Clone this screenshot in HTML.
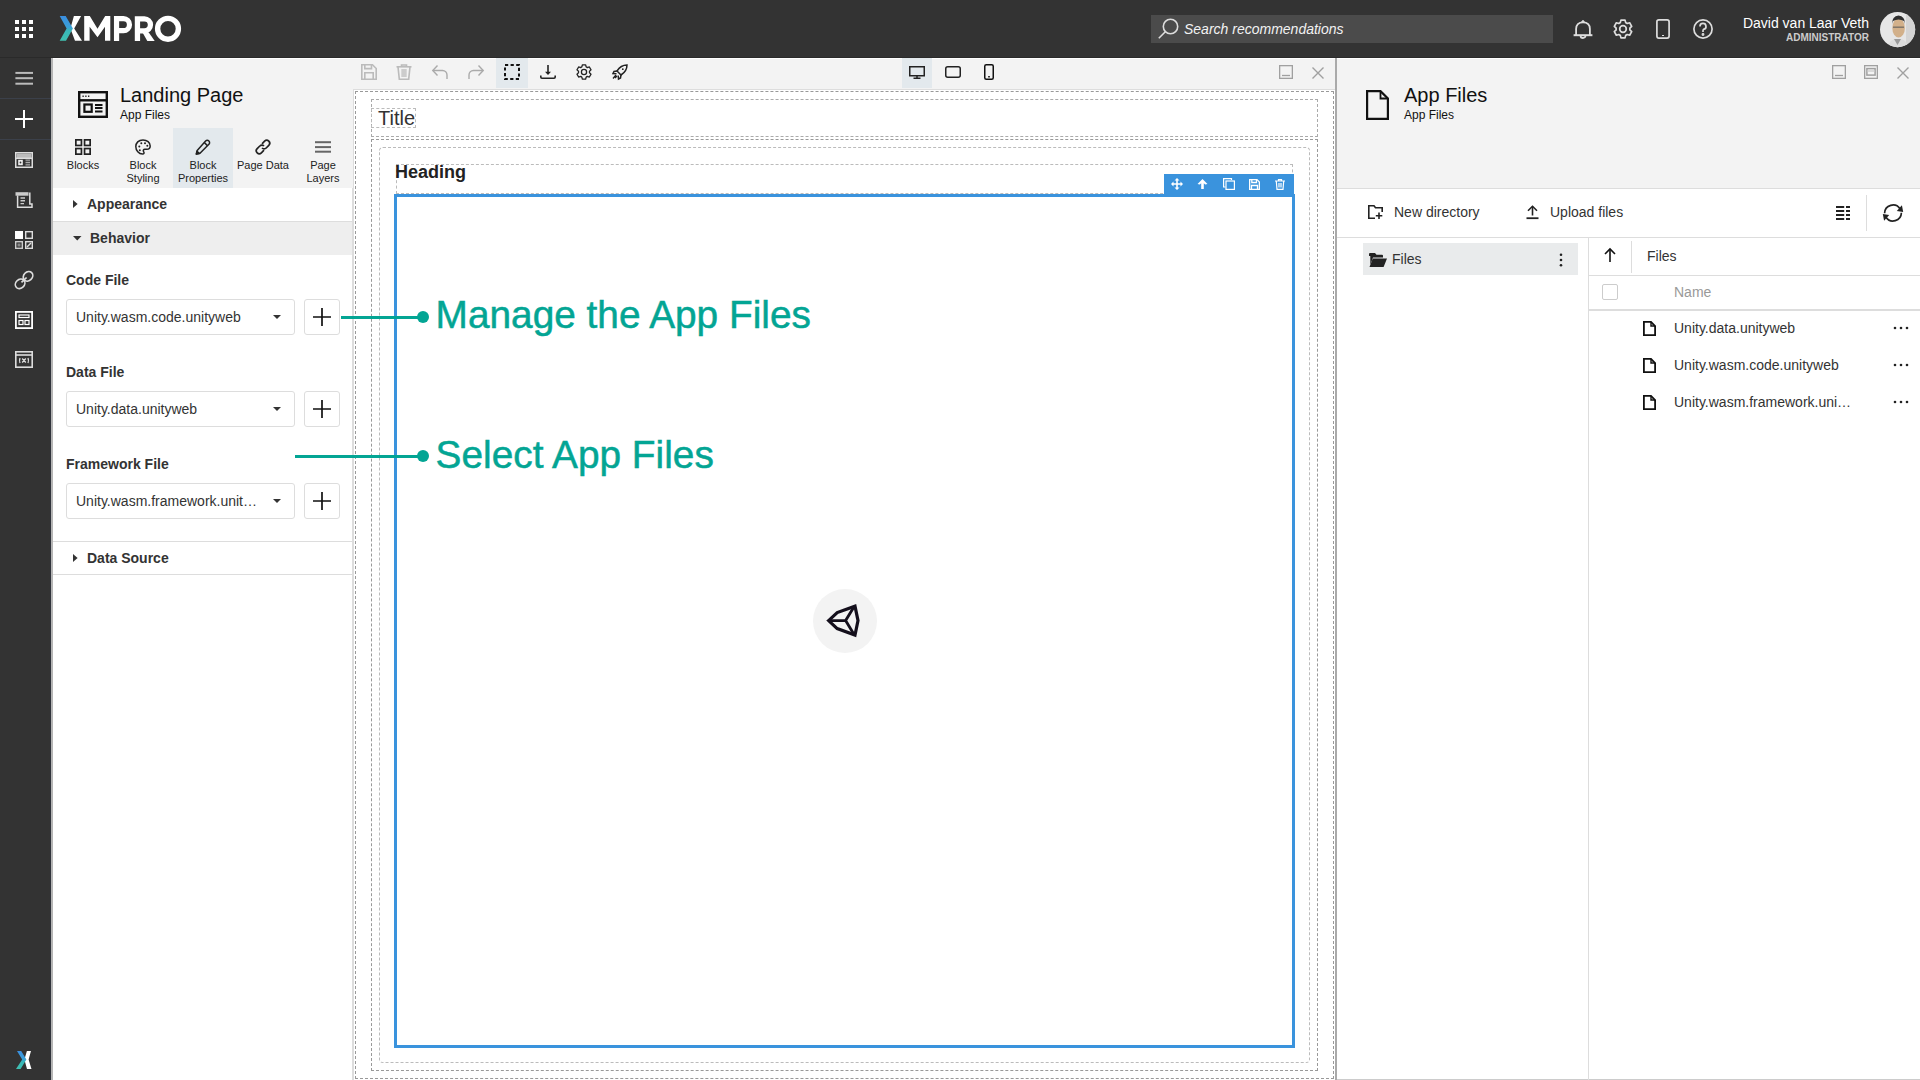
<!DOCTYPE html>
<html><head><meta charset="utf-8">
<style>
*{box-sizing:border-box;margin:0;padding:0}
html,body{width:1920px;height:1080px;overflow:hidden;background:#fff;font-family:"Liberation Sans",sans-serif;color:#222}
.a{position:absolute}
.t{position:absolute;white-space:nowrap;line-height:1}
svg{position:absolute;overflow:visible}
#top{left:0;top:0;width:1920px;height:58px;background:#333;border-bottom:1px solid #2a2a2a}
#side{left:0;top:58px;width:51px;height:1022px;background:#333}
</style></head><body>
<!-- TOP BAR -->
<div id="top" class="a"></div>
<div class="a" style="left:0;top:58px;width:1920px;height:1px;background:#fff"></div>
<!-- grid icon -->
<svg style="left:15px;top:20px" width="18" height="18" viewBox="0 0 18 18" fill="#fff">
<rect x="0" y="0" width="4" height="4"/><rect x="7" y="0" width="4" height="4"/><rect x="14" y="0" width="4" height="4"/>
<rect x="0" y="7" width="4" height="4"/><rect x="7" y="7" width="4" height="4"/><rect x="14" y="7" width="4" height="4"/>
<rect x="0" y="14" width="4" height="4"/><rect x="7" y="14" width="4" height="4"/><rect x="14" y="14" width="4" height="4"/>
</svg>
<!-- XMPRO logo -->
<svg style="left:60px;top:16px" width="122" height="26" viewBox="0 0 122 26">
<defs><linearGradient id="xg" x1="0" y1="0" x2="0" y2="1"><stop offset="0" stop-color="#3a8ee0"/><stop offset="0.45" stop-color="#3aa0d8"/><stop offset="0.6" stop-color="#38b8b8"/><stop offset="1" stop-color="#40c0b0"/></linearGradient></defs>
<polygon points="13.9,0.1 21.1,0.1 14.2,12.6 22,24.8 15,24.8 10.4,12.6" fill="#fff"/>
<polygon points="-0.3,0.1 5.7,0.1 12.9,12.6 6,24.8 -0.3,24.8 6.6,12.6" fill="url(#xg)"/>
<polygon points="24.2,24.8 24.2,0.1 29.8,0.1 37.5,12.7 45.2,0.1 50.3,0.1 50.3,24.8 45,24.8 45,10.8 37.5,21.2 29.6,10.8 29.6,24.8" fill="#fff"/>
<path d="M56.55,25 V2.7 H63.5 A5.97,5.97 0 0 1 63.5,14.65 H56.55" fill="none" stroke="#fff" stroke-width="5.2"/>
<path d="M77.45,25 V2.8 H84.4 A6.05,6.05 0 0 1 84.4,14.9 H77.45" fill="none" stroke="#fff" stroke-width="5.3"/>
<polygon points="82.5,16.5 88.8,16.5 94.7,25 87.3,25" fill="#fff"/>
<circle cx="108" cy="12.8" r="10.4" fill="none" stroke="#fff" stroke-width="5.4"/>
</svg>
<!-- search -->
<div class="a" style="left:1151px;top:15px;width:402px;height:28px;background:#4b4b4b"></div>
<svg style="left:1157px;top:17px" width="24" height="24" viewBox="0 0 24 24" fill="none" stroke="#ddd" stroke-width="1.6">
<circle cx="13.5" cy="9.5" r="7.2"/><path d="M8.3,14.7 L1.8,21.2"/>
</svg>
<div class="t" style="left:1184px;top:22px;font-size:14px;font-style:italic;color:#f2f2f2">Search recommendations</div>
<!-- top right icons -->
<svg style="left:1573px;top:19px" width="20" height="20" viewBox="0 0 20 20" fill="none" stroke="#ddd" stroke-width="1.8">
<path d="M3.1,16 V10 Q3.1,3.4 10,3.4 Q16.9,3.4 16.9,10 V16"/><path d="M0.6,16.2 H19.4" stroke-width="2"/><path d="M7.6,17 A2.4,2 0 0 0 12.4,17"/><path d="M8.6,2.6 Q10,0.4 11.4,2.6 Z" fill="#ddd" stroke-width="1"/>
</svg>
<svg style="left:1613px;top:19px" width="20" height="20" viewBox="0 0 20 20" fill="none" stroke="#ddd" stroke-width="1.7" stroke-linejoin="round">
<path d="M12.70,3.65 L12.05,1.13 L7.95,1.13 L7.30,3.65 A6.9,6.9 0 0 0 5.85,4.49 L3.34,3.79 L1.30,7.34 L3.15,9.16 A6.9,6.9 0 0 0 3.15,10.84 L1.30,12.66 L3.34,16.21 L5.85,15.51 A6.9,6.9 0 0 0 7.30,16.35 L7.95,18.87 L12.05,18.87 L12.70,16.35 A6.9,6.9 0 0 0 14.15,15.51 L16.66,16.21 L18.70,12.66 L16.85,10.84 A6.9,6.9 0 0 0 16.85,9.16 L18.70,7.34 L16.66,3.79 L14.15,4.49 A6.9,6.9 0 0 0 12.70,3.65 Z"/><circle cx="10" cy="10" r="3.3"/>
</svg>
<svg style="left:1656px;top:19px" width="14" height="20" viewBox="0 0 14 20" fill="none" stroke="#ddd" stroke-width="1.7">
<rect x="0.9" y="0.9" width="12.2" height="18.2" rx="2"/><path d="M6,16.5 h2" stroke-width="1.2"/>
</svg>
<svg style="left:1693px;top:19px" width="20" height="20" viewBox="0 0 20 20" fill="none" stroke="#ddd" stroke-width="1.7">
<circle cx="10" cy="10" r="9.1"/><path d="M7,7.5 A3,3 0 1 1 10.5,10.4 Q10,10.8 10,12 V13"/><circle cx="10" cy="15.5" r="0.6" fill="#ddd"/>
</svg>
<div class="t" style="right:51px;top:16px;font-size:14px;color:#fff">David van Laar Veth</div>
<div class="t" style="right:51px;top:33px;font-size:10px;font-weight:bold;color:#ccc">ADMINISTRATOR</div>
<!-- avatar -->
<svg style="left:1880px;top:12px" width="36" height="36" viewBox="0 0 36 36">
<defs><clipPath id="avc"><circle cx="17.6" cy="17.6" r="17.6"/></clipPath></defs>
<circle cx="17.6" cy="17.6" r="17.6" fill="#e6e6e6"/>
<g clip-path="url(#avc)">
<rect x="26" y="0" width="10" height="36" fill="#d4d4d4"/>
<path d="M8,36 Q9,28 15,27 H21 Q27,28 28,36 Z" fill="#dcdcdc"/>
<path d="M14,27 L17.5,33 L21,27 Z" fill="#9a9a9a"/>
<ellipse cx="18.6" cy="16" rx="6.3" ry="9.5" fill="#d2b08a"/>
<path d="M12,12 Q12,4 18.5,3.5 Q25,4 25,12 L24,9 Q18.5,6 13,9 Z" fill="#2e2e2e"/>
<rect x="13" y="14.5" width="11" height="1.4" fill="#555" opacity="0.7"/>
</g>
</svg>

<!-- LEFT SIDEBAR -->
<div id="side" class="a"></div>
<div class="a" style="left:50px;top:59px;width:1px;height:1021px;background:#2f333a"></div>
<div class="a" style="left:0;top:98px;width:51px;height:1px;background:#3b404a"></div>
<div class="a" style="left:0;top:139px;width:51px;height:1px;background:#3b404a"></div>
<svg style="left:15px;top:71px" width="18" height="15" viewBox="0 0 18 15" fill="#bbb">
<rect x="0.4" y="0.9" width="17.6" height="2"/><rect x="0.4" y="6.2" width="17.6" height="2"/><rect x="0.4" y="11.7" width="17.6" height="2"/>
</svg>
<svg style="left:15px;top:110px" width="18" height="18" viewBox="0 0 18 18" stroke="#fff" stroke-width="2">
<path d="M9,0 V18 M0,9 H18"/>
</svg>
<svg style="left:15px;top:152px" width="18" height="16" viewBox="0 0 18 16" fill="none" stroke="#ddd" stroke-width="1.5">
<rect x="0.75" y="0.75" width="16.5" height="14.5"/><rect x="1.5" y="1.5" width="15" height="4.5" fill="#bbb" stroke="none"/><path d="M0.75,6.3 H17.25"/><rect x="3.2" y="7.8" width="4.6" height="5.4" fill="#eee" stroke="none"/><circle cx="5.5" cy="10.5" r="0.9" fill="#333" stroke="none"/><path d="M10.5,8.2 H15 M10.5,10.5 H15 M10.5,12.8 H15" stroke="#aaa" stroke-width="1.3"/>
</svg>
<svg style="left:15px;top:191px" width="18" height="18" viewBox="0 0 18 18" fill="none" stroke="#ddd" stroke-width="1.5">
<rect x="0.5" y="1.2" width="13" height="3.5" fill="#ccc" stroke="none"/><path d="M2.6,4.5 V16.2 H17 V13 H14.8 V1.5"/><path d="M5.5,7 H10 M5.5,9.8 H10 M5.5,12.6 H9" stroke="#ccc" stroke-width="1.4"/>
</svg>
<svg style="left:15px;top:231px" width="18" height="18" viewBox="0 0 18 18">
<rect x="0" y="0" width="8" height="8" fill="#fff"/><rect x="10.7" y="0.7" width="6.6" height="6.6" fill="#333" stroke="#ddd" stroke-width="1.4"/>
<rect x="0.7" y="10.7" width="6.6" height="6.6" fill="none" stroke="#ccc" stroke-width="1.4"/><rect x="2.5" y="12.5" width="3" height="3" fill="#888"/>
<rect x="10.7" y="10.7" width="6.6" height="6.6" fill="none" stroke="#ddd" stroke-width="1.4"/><path d="M12,16 L16,12" stroke="#ddd" stroke-width="1.4"/>
</svg>
<svg style="left:15px;top:271px" width="18" height="18" viewBox="0 0 18 18" fill="none" stroke="#ddd" stroke-width="1.7">
<ellipse cx="13" cy="5.3" rx="5.2" ry="4.3" transform="rotate(-45 13 5.3)"/><ellipse cx="5.1" cy="12.8" rx="5.2" ry="4.3" transform="rotate(-45 5.1 12.8)"/><path d="M6.5,11.3 L11.6,6.5"/>
</svg>
<svg style="left:15px;top:311px" width="18" height="18" viewBox="0 0 18 18" fill="none" stroke="#fff" stroke-width="1.8">
<rect x="0.9" y="0.9" width="16.2" height="16.2"/><rect x="4" y="4" width="10" height="2.5" stroke-width="1.2"/><rect x="4" y="9.5" width="4" height="4" stroke-width="1.2"/><rect x="10" y="9.5" width="4" height="4" stroke-width="1.2"/>
</svg>
<svg style="left:15px;top:351px" width="18" height="17" viewBox="0 0 18 17" fill="none" stroke="#ddd" stroke-width="1.6">
<rect x="0.8" y="0.8" width="16.4" height="15.4"/><path d="M0.8,4 H17.2"/><path d="M5,7 Q4,9.5 5,12 M13,7 Q14,9.5 13,12 M7.2,7.5 L10.8,11.5 M10.8,7.5 L7.2,11.5" stroke-width="1.3"/>
</svg>
<!-- bottom X -->
<svg style="left:16px;top:1051px" width="16" height="18" viewBox="0 0 16 18">
<polygon points="10.9,0 15,0 12.6,8.5 15.5,18 11,18 8.4,8.5" fill="#fff"/>
<polygon points="1,0 5.2,0 10.4,8.5 4.6,18 0,18 6.2,8.5" fill="url(#xg)"/>
</svg>


<!-- LEFT PANEL -->
<div class="a" style="left:51px;top:59px;width:302px;height:1021px;background:#fff"></div>
<div class="a" style="left:51px;top:58px;width:2px;height:1022px;background:#b5b5b5"></div>
<div class="a" style="left:53px;top:59px;width:300px;height:129px;background:#f3f3f3"></div>
<div class="a" style="left:352px;top:188px;width:1px;height:892px;background:#ddd"></div>
<!-- page icon -->
<svg style="left:78px;top:91px" width="30" height="27" viewBox="0 0 30 27" fill="none" stroke="#111" stroke-width="2.4">
<rect x="1.2" y="1.2" width="27.6" height="24.6"/><path d="M1.2,9.3 H28.8"/><rect x="6.4" y="13.5" width="7.3" height="7.3" stroke-width="2.2"/><path d="M17,14 H24.5 M17,17.1 H24.5 M17,20.6 H24.5" stroke-width="2"/>
<path d="M4.5,5.2 H5.7 M7.3,5.2 H8.5 M10.1,5.2 H11.3" stroke-width="1.6"/>
</svg>
<div class="t" style="left:120px;top:85px;font-size:20px;color:#111">Landing Page</div>
<div class="t" style="left:120px;top:109px;font-size:12px;color:#111">App Files</div>
<!-- tabs -->
<div class="a" style="left:173px;top:128px;width:60px;height:60px;background:#e3e9ed"></div>
<svg style="left:75px;top:139px" width="16" height="16" viewBox="0 0 16 16" fill="none" stroke="#222" stroke-width="1.7">
<rect x="0.85" y="0.85" width="5.6" height="5.6"/><rect x="9.55" y="0.85" width="5.6" height="5.6"/><rect x="0.85" y="9.55" width="5.6" height="5.6"/><rect x="9.55" y="9.55" width="5.6" height="5.6"/>
</svg>
<svg style="left:135px;top:139px" width="16" height="16" viewBox="0 0 16 16" fill="none" stroke="#222" stroke-width="1.5">
<path d="M8,0.9 C3.5,0.9 0.8,4 0.8,7.6 C0.8,11.6 3.8,15.1 7.5,15.1 C9.2,15.1 9.4,13.6 8.6,12.6 C7.8,11.6 8.4,10.3 9.9,10.3 H11.8 C14,10.3 15.2,8.9 15.2,7 C15.2,3.6 12,0.9 8,0.9 Z"/>
<circle cx="4.3" cy="7.5" r="1" fill="#222" stroke="none"/><circle cx="6.3" cy="4.3" r="1" fill="#222" stroke="none"/><circle cx="10" cy="4.2" r="1" fill="#222" stroke="none"/><circle cx="12.3" cy="6.8" r="1" fill="#222" stroke="none"/><circle cx="4.8" cy="11.3" r="1" fill="#222" stroke="none"/>
</svg>
<svg style="left:195px;top:139px" width="16" height="16" viewBox="0 0 16 16" fill="none" stroke="#222" stroke-width="1.5" stroke-linejoin="round">
<path d="M10.6,2 A1.9,1.9 0 0 1 13.9,5.3 L5,14.2 L1.4,15 L2.2,11.4 Z"/><path d="M9.2,3.4 L12.5,6.7"/><path d="M1.4,15 L2,12.2 L4.2,14.4 Z" fill="#222"/>
</svg>
<svg style="left:255px;top:139px" width="16" height="16" viewBox="0 0 16 16" fill="none" stroke="#222" stroke-width="1.7">
<path d="M7,4.8 L9.6,2.2 A2.9,2.9 0 0 1 13.8,6.4 L11.2,9 A2.9,2.9 0 0 1 7,9"/><path d="M9,7 A2.9,2.9 0 0 0 4.8,7 L2.2,9.6 A2.9,2.9 0 0 0 6.4,13.8 L9,11.2"/>
</svg>
<svg style="left:315px;top:139px" width="16" height="16" viewBox="0 0 16 16" fill="#666">
<rect x="0" y="2.2" width="16" height="2"/><rect x="0" y="7.1" width="16" height="2"/><rect x="0" y="11.7" width="16" height="2"/>
</svg>
<div class="t" style="left:53px;width:60px;text-align:center;top:160px;font-size:11px;color:#222">Blocks</div>
<div class="t" style="left:113px;width:60px;text-align:center;top:159px;font-size:11px;color:#222;line-height:13px;white-space:normal">Block<br>Styling</div>
<div class="t" style="left:173px;width:60px;text-align:center;top:159px;font-size:11px;color:#222;line-height:13px;white-space:normal">Block<br>Properties</div>
<div class="t" style="left:233px;width:60px;text-align:center;top:160px;font-size:11px;color:#222">Page Data</div>
<div class="t" style="left:293px;width:60px;text-align:center;top:159px;font-size:11px;color:#222;line-height:13px;white-space:normal">Page<br>Layers</div>
<!-- accordion -->
<div class="a" style="left:53px;top:221px;width:299px;height:1px;background:#ddd"></div>
<div class="a" style="left:53px;top:222px;width:299px;height:33px;background:#eee"></div>
<svg style="left:73px;top:200px" width="5" height="8" viewBox="0 0 5 8" fill="#333"><polygon points="0,0 4.6,4 0,8"/></svg>
<div class="t" style="left:87px;top:197px;font-size:14px;font-weight:bold;color:#333">Appearance</div>
<svg style="left:73px;top:236px" width="9" height="5" viewBox="0 0 9 5" fill="#333"><polygon points="0,0 8.5,0 4.25,4.5"/></svg>
<div class="t" style="left:90px;top:231px;font-size:14px;font-weight:bold;color:#333">Behavior</div>
<!-- fields -->
<div class="t" style="left:66px;top:273px;font-size:14px;font-weight:bold;color:#333">Code File</div>
<div class="a" style="left:66px;top:299px;width:229px;height:36px;border:1px solid #ddd;border-radius:3px;background:#fff"></div>
<div class="t" style="left:76px;top:310px;font-size:14px;color:#333">Unity.wasm.code.unityweb</div>
<svg style="left:273px;top:315px" width="8" height="4" viewBox="0 0 8 4" fill="#333"><polygon points="0,0 8,0 4,4"/></svg>
<div class="a" style="left:304px;top:299px;width:36px;height:36px;border:1px solid #ddd;border-radius:3px;background:#fff"></div>
<svg style="left:313px;top:308px" width="18" height="18" viewBox="0 0 18 18" stroke="#111" stroke-width="1.7"><path d="M9,0 V18 M0,9 H18"/></svg>

<div class="t" style="left:66px;top:365px;font-size:14px;font-weight:bold;color:#333">Data File</div>
<div class="a" style="left:66px;top:391px;width:229px;height:36px;border:1px solid #ddd;border-radius:3px;background:#fff"></div>
<div class="t" style="left:76px;top:402px;font-size:14px;color:#333">Unity.data.unityweb</div>
<svg style="left:273px;top:407px" width="8" height="4" viewBox="0 0 8 4" fill="#333"><polygon points="0,0 8,0 4,4"/></svg>
<div class="a" style="left:304px;top:391px;width:36px;height:36px;border:1px solid #ddd;border-radius:3px;background:#fff"></div>
<svg style="left:313px;top:400px" width="18" height="18" viewBox="0 0 18 18" stroke="#111" stroke-width="1.7"><path d="M9,0 V18 M0,9 H18"/></svg>

<div class="t" style="left:66px;top:457px;font-size:14px;font-weight:bold;color:#333">Framework File</div>
<div class="a" style="left:66px;top:483px;width:229px;height:36px;border:1px solid #ddd;border-radius:3px;background:#fff"></div>
<div class="t" style="left:76px;top:494px;font-size:14px;color:#333">Unity.wasm.framework.unit&hellip;</div>
<svg style="left:273px;top:499px" width="8" height="4" viewBox="0 0 8 4" fill="#333"><polygon points="0,0 8,0 4,4"/></svg>
<div class="a" style="left:304px;top:483px;width:36px;height:36px;border:1px solid #ddd;border-radius:3px;background:#fff"></div>
<svg style="left:313px;top:492px" width="18" height="18" viewBox="0 0 18 18" stroke="#111" stroke-width="1.7"><path d="M9,0 V18 M0,9 H18"/></svg>

<div class="a" style="left:53px;top:541px;width:299px;height:1px;background:#ddd"></div>
<svg style="left:73px;top:554px" width="5" height="8" viewBox="0 0 5 8" fill="#333"><polygon points="0,0 4.6,4 0,8"/></svg>
<div class="t" style="left:87px;top:551px;font-size:14px;font-weight:bold;color:#333">Data Source</div>
<div class="a" style="left:53px;top:574px;width:299px;height:1px;background:#ddd"></div>

<!-- CANVAS -->
<div class="a" style="left:353px;top:59px;width:982px;height:30px;background:#f3f3f3"></div>
<div class="a" style="left:353px;top:89px;width:982px;height:991px;background:#fff;border-left:1px solid #ddd;border-top:1px solid #ddd"></div>
<div class="a" style="left:496px;top:58px;width:32px;height:30px;background:#e3e9ed"></div>
<div class="a" style="left:902px;top:58px;width:30px;height:30px;background:#e3e9ed"></div>

<svg style="left:361px;top:64px" width="16" height="16" viewBox="0 0 16 16" fill="none" stroke="#bbb" stroke-width="1.6">
<path d="M0.8,0.8 H11.5 L15.2,4.5 V15.2 H0.8 Z"/><path d="M3.8,0.8 V4.6 H10.5 V0.8"/><path d="M3.8,15.2 V8.8 H12.2 V15.2"/>
</svg>
<svg style="left:396px;top:64px" width="16" height="16" viewBox="0 0 16 16" fill="none" stroke="#bbb" stroke-width="1.6">
<path d="M0.5,2.8 H15.5"/><path d="M5.5,2.8 V1 H10.5 V2.8"/><path d="M2,2.8 L3.3,15.2 H12.7 L14,2.8"/><rect x="5.3" y="5" width="5.4" height="8" fill="#ccc" stroke="none"/>
</svg>
<svg style="left:432px;top:65px" width="16" height="14" viewBox="0 0 16 14" fill="none" stroke="#aaa" stroke-width="1.4">
<path d="M5.5,0.5 L0.8,5.5 L5.5,10.5"/><path d="M0.8,5.5 H10.5 A4.5,4.5 0 0 1 15,10 V14"/>
</svg>
<svg style="left:468px;top:65px" width="16" height="14" viewBox="0 0 16 14" fill="none" stroke="#aaa" stroke-width="1.4">
<path d="M10.5,0.5 L15.2,5.5 L10.5,10.5"/><path d="M15.2,5.5 H5.5 A4.5,4.5 0 0 0 1,10 V14"/>
</svg>
<svg style="left:504px;top:64px" width="16" height="16" viewBox="0 0 16 16" fill="none" stroke="#111" stroke-width="2" stroke-dasharray="3.2 2.4">
<rect x="1" y="1" width="14" height="14"/>
</svg>
<svg style="left:540px;top:65px" width="16" height="14" viewBox="0 0 16 14" fill="none" stroke="#222" stroke-width="1.6">
<path d="M8,0 V9"/><polygon points="5,6.8 11,6.8 8,10" fill="#222" stroke="none"/><path d="M0.8,10.5 V12 Q0.8,13.2 2,13.2 H14 Q15.2,13.2 15.2,12 V10.5"/>
</svg>
<svg style="left:576px;top:64px" width="16" height="16" viewBox="0 0 16 16" fill="none" stroke="#222" stroke-width="1.3" stroke-linejoin="round">
<path d="M10.15,2.94 L9.65,0.84 L6.35,0.84 L5.85,2.94 A5.5,5.5 0 0 0 4.69,3.61 L2.62,2.99 L0.97,5.85 L2.54,7.33 A5.5,5.5 0 0 0 2.54,8.67 L0.97,10.15 L2.62,13.01 L4.69,12.39 A5.5,5.5 0 0 0 5.85,13.06 L6.35,15.16 L9.65,15.16 L10.15,13.06 A5.5,5.5 0 0 0 11.31,12.39 L13.38,13.01 L15.03,10.15 L13.46,8.67 A5.5,5.5 0 0 0 13.46,7.33 L15.03,5.85 L13.38,2.99 L11.31,3.61 A5.5,5.5 0 0 0 10.15,2.94 Z"/><circle cx="8" cy="8" r="2.6"/>
</svg>
<svg style="left:612px;top:64px" width="16" height="16" viewBox="0 0 16 16" fill="none" stroke="#222" stroke-width="1.5">
<path d="M15,1 C11,1 7.5,3 5,7 L9,11 C13,8.5 15,5 15,1 Z"/><circle cx="10.8" cy="5.2" r="0.9" fill="#222" stroke="none"/><path d="M5,7 L2,7.5 L1,9.5 L4.5,9.8 M9,11 L8.5,14 L6.5,15 L6.2,11.5"/><path d="M4,11 L1,14.5 M5,12 L3,14" stroke-width="1.3"/>
</svg>
<!-- devices -->
<svg style="left:909px;top:66px" width="16" height="13" viewBox="0 0 16 13" fill="none" stroke="#222" stroke-width="1.5">
<rect x="0.75" y="0.75" width="14.5" height="9"/><path d="M8,9.8 V12.2 M4.5,12.3 H11.5"/>
</svg>
<svg style="left:945px;top:66px" width="16" height="12" viewBox="0 0 16 12" fill="none" stroke="#222" stroke-width="1.5">
<rect x="0.75" y="0.75" width="14.5" height="10.5" rx="2"/>
</svg>
<svg style="left:984px;top:64px" width="10" height="16" viewBox="0 0 10 16" fill="none" stroke="#111" stroke-width="1.5">
<rect x="0.75" y="0.75" width="8.5" height="14.5" rx="1.5"/><rect x="4" y="12.2" width="2" height="1.2" fill="#111" stroke="none"/>
</svg>
<!-- canvas window controls -->
<svg style="left:1279px;top:65px" width="14" height="14" viewBox="0 0 14 14" fill="none" stroke="#a0a0a0" stroke-width="1.3">
<rect x="0.65" y="0.65" width="12.7" height="12.7"/><path d="M3,10.5 H11"/>
</svg>
<svg style="left:1312px;top:67px" width="12" height="12" viewBox="0 0 12 12" fill="none" stroke="#a0a0a0" stroke-width="1.4">
<path d="M0.5,0.5 L11.5,11.5 M11.5,0.5 L0.5,11.5"/>
</svg>

<div class="a" style="left:355px;top:91px;width:979px;height:988px;border:1px dashed #999"></div>
<div class="a" style="left:371px;top:99px;width:947px;height:38px;border:1px dashed #aaa"></div>
<div class="a" style="left:371px;top:108px;width:45px;height:20px;border:1px dashed #bbb"></div>
<div class="t" style="left:378px;top:108px;font-size:20px;color:#333">Title</div>
<div class="a" style="left:371px;top:139px;width:947px;height:932px;border:1px dashed #999"></div>
<div class="a" style="left:379px;top:147px;width:931px;height:916px;border:1px dashed #bbb;border-radius:4px"></div>
<div class="a" style="left:396px;top:164px;width:897px;height:30px;border:1px dashed #bbb"></div>
<div class="t" style="left:395px;top:163px;font-size:18px;font-weight:bold;color:#222">Heading</div>
<div class="a" style="left:394px;top:194px;width:901px;height:854px;border:3px solid #3a93dd"></div>
<div class="a" style="left:1164px;top:174px;width:130px;height:21px;background:#3a93dd"></div>
<svg style="left:1171px;top:178px" width="12" height="12" viewBox="0 0 12 12" fill="#fff">
<path d="M6,0 L8.5,2.5 H6.8 V5.2 H9.5 V3.5 L12,6 L9.5,8.5 V6.8 H6.8 V9.5 H8.5 L6,12 L3.5,9.5 H5.2 V6.8 H2.5 V8.5 L0,6 L2.5,3.5 V5.2 H5.2 V2.5 H3.5 Z"/>
</svg>
<svg style="left:1197px;top:179px" width="11" height="10" viewBox="0 0 11 10" fill="#fff">
<path d="M5.5,0 L10.5,5 L8.2,5.5 L6.8,4.3 V10 H4.2 V4.3 L2.8,5.5 L0.5,5 Z"/>
</svg>
<svg style="left:1223px;top:178px" width="12" height="12" viewBox="0 0 12 12" fill="none" stroke="#fff" stroke-width="1.2">
<path d="M8.5,2 V0.6 H0.6 V9 H2.5"/><rect x="3" y="3" width="8.4" height="8.4"/>
</svg>
<svg style="left:1249px;top:179px" width="11" height="11" viewBox="0 0 11 11" fill="none" stroke="#fff" stroke-width="1.3">
<path d="M0.65,0.65 H8 L10.35,3 V10.35 H0.65 Z"/><path d="M2.8,0.65 V3.5 H7.5 V0.65"/><path d="M2.5,10.35 V6.5 H8.5 V10.35"/>
</svg>
<svg style="left:1275px;top:179px" width="10" height="11" viewBox="0 0 10 11" fill="none" stroke="#fff" stroke-width="1.2">
<path d="M0,2 H10 M3.5,2 V0.6 H6.5 V2 M1.3,2 L2,10.4 H8 L8.7,2 M4,4 V8.5 M6,4 V8.5"/>
</svg>
<!-- unity -->
<div class="a" style="left:813px;top:589px;width:64px;height:64px;border-radius:50%;background:#f3f3f3"></div>
<svg style="left:820px;top:600px" width="44" height="44" viewBox="0 0 44 44" fill="none" stroke="#140f1c">
<polygon points="8.6,20.6 17.2,12.6 35,6.2 38,20.6 35,35 17.2,28.6" stroke-width="3.2" stroke-linejoin="miter"/>
<path d="M9,20.6 H25.6 L33.6,7.5 M25.6,20.6 L33.6,33.7" stroke-width="2.8"/>
</svg>

<!-- ANNOTATIONS -->
<div class="a" style="left:341px;top:316px;width:82px;height:3px;background:#03a594"></div>
<div class="a" style="left:417px;top:311px;width:12px;height:12px;border-radius:50%;background:#03a594"></div>
<div class="t" style="left:435.6px;top:296px;font-size:38.8px;color:#03a594;-webkit-text-stroke:0.5px #03a594">Manage the App Files</div>
<div class="a" style="left:295px;top:455px;width:128px;height:3px;background:#03a594"></div>
<div class="a" style="left:417px;top:450px;width:12px;height:12px;border-radius:50%;background:#03a594"></div>
<div class="t" style="left:435.6px;top:436px;font-size:38.8px;color:#03a594;-webkit-text-stroke:0.5px #03a594">Select App Files</div>

<!-- RIGHT PANEL -->
<div class="a" style="left:1335px;top:58px;width:2px;height:1022px;background:#aaa"></div>
<div class="a" style="left:1337px;top:59px;width:583px;height:1021px;background:#fff"></div>
<div class="a" style="left:1337px;top:59px;width:583px;height:129px;background:#f3f3f3"></div>
<div class="a" style="left:1337px;top:188px;width:583px;height:1px;background:#ddd"></div>
<div class="a" style="left:1337px;top:1079px;width:583px;height:1px;background:#ccc"></div>
<!-- right header -->
<svg style="left:1366px;top:90px" width="23" height="30" viewBox="0 0 23 30" fill="none" stroke="#111" stroke-width="2.2">
<path d="M1.1,1.1 H14.5 L21.9,8.5 V28.9 H1.1 Z"/><path d="M14.5,1.1 V8.5 H21.9" stroke-width="1.8"/>
</svg>
<div class="t" style="left:1404px;top:85px;font-size:20px;color:#111">App Files</div>
<div class="t" style="left:1404px;top:109px;font-size:12px;color:#111">App Files</div>
<svg style="left:1832px;top:65px" width="14" height="14" viewBox="0 0 14 14" fill="none" stroke="#a0a0a0" stroke-width="1.3">
<rect x="0.65" y="0.65" width="12.7" height="12.7"/><path d="M3,10.5 H11"/>
</svg>
<svg style="left:1864px;top:65px" width="14" height="14" viewBox="0 0 14 14" fill="none" stroke="#a0a0a0" stroke-width="1.3">
<rect x="0.65" y="0.65" width="12.7" height="12.7"/><rect x="2.9" y="3.6" width="8.2" height="6.5" stroke-width="1.5"/><path d="M2.9,6 H11.1" stroke="#c8c8c8" stroke-width="1.2"/>
</svg>
<svg style="left:1897px;top:67px" width="12" height="12" viewBox="0 0 12 12" fill="none" stroke="#a0a0a0" stroke-width="1.4">
<path d="M0.5,0.5 L11.5,11.5 M11.5,0.5 L0.5,11.5"/>
</svg>
<!-- toolbar -->
<svg style="left:1368px;top:205px" width="15" height="14" viewBox="0 0 15 14" fill="none" stroke="#222" stroke-width="1.6">
<path d="M7,13.2 H0.8 V0.8 H6 L7.5,2.8 H14.2 V7"/><path d="M11,7.5 V14 M7.8,10.7 H14.3"/>
</svg>
<div class="t" style="left:1394px;top:205px;font-size:14px;color:#333">New directory</div>
<svg style="left:1526px;top:205px" width="13" height="14" viewBox="0 0 13 14" fill="none" stroke="#222" stroke-width="1.6">
<path d="M6.5,1.5 V10.5"/><path d="M2,5.8 L6.5,1.3 L11,5.8"/><path d="M0.5,13.2 H12.5" stroke-width="1.8"/>
</svg>
<div class="t" style="left:1550px;top:205px;font-size:14px;color:#333">Upload files</div>
<svg style="left:1835px;top:206px" width="16" height="14" viewBox="0 0 16 14" fill="#222">
<rect x="1" y="0" width="8.2" height="2"/><rect x="11" y="0" width="4" height="2"/>
<rect x="1" y="4" width="8.2" height="2"/><rect x="11" y="4" width="4" height="2"/>
<rect x="1" y="8" width="8.2" height="2"/><rect x="11" y="8" width="4" height="2"/>
<rect x="1" y="12" width="8.2" height="2"/><rect x="11" y="12" width="4" height="2"/>
</svg>
<div class="a" style="left:1866px;top:195px;width:1px;height:36px;background:#ddd"></div>
<svg style="left:1883px;top:203px" width="20" height="20" viewBox="0 0 20 20" fill="none" stroke="#222" stroke-width="1.7">
<path d="M1.6,10.2 A8.4,8.4 0 0 1 17,5.8"/><path d="M18.4,9.8 A8.4,8.4 0 0 1 3,14.2"/><polygon points="18.9,2.3 20.2,8.9 13.8,7.9" fill="#222" stroke="none"/><polygon points="1.1,17.7 -0.2,11.1 6.2,12.1" fill="#222" stroke="none"/>
</svg>
<div class="a" style="left:1337px;top:237px;width:583px;height:1px;background:#ddd"></div>
<!-- tree -->
<div class="a" style="left:1363px;top:243px;width:215px;height:32px;background:#e9ebec"></div>
<svg style="left:1369px;top:253px" width="18" height="14" viewBox="0 0 18 14" fill="#222">
<path d="M0,1 Q0,0 1,0 H6 L7.5,1.8 H13 Q14,1.8 14,2.8 V4.5 H4 L1.3,12 V3 H0 Z"/><path d="M0.5,14 L3.8,5.6 H18 L14.6,14 Z"/>
</svg>
<div class="t" style="left:1392px;top:252px;font-size:14px;color:#333">Files</div>
<svg style="left:1559px;top:253px" width="4" height="14" viewBox="0 0 4 14" fill="#222">
<circle cx="2" cy="1.8" r="1.3"/><circle cx="2" cy="7" r="1.3"/><circle cx="2" cy="12.2" r="1.3"/>
</svg>
<div class="a" style="left:1588px;top:237px;width:1px;height:843px;background:#ddd"></div>
<svg style="left:1604px;top:248px" width="12" height="14" viewBox="0 0 12 14" fill="none" stroke="#111" stroke-width="1.6">
<path d="M6,1.5 V14"/><path d="M1,6 L6,1 L11,6"/>
</svg>
<div class="a" style="left:1631px;top:241px;width:1px;height:32px;background:#ddd"></div>
<div class="t" style="left:1647px;top:249px;font-size:14px;color:#333">Files</div>
<div class="a" style="left:1589px;top:275px;width:331px;height:1px;background:#ddd"></div>
<div class="a" style="left:1602px;top:284px;width:16px;height:16px;border:1px solid #ccc;border-radius:2px;background:#fff"></div>
<div class="t" style="left:1674px;top:285px;font-size:14px;color:#999">Name</div>
<div class="a" style="left:1589px;top:309px;width:331px;height:2px;background:#ddd"></div>
<svg style="left:1643px;top:321px" width="13" height="15" viewBox="0 0 13 15" fill="none" stroke="#111" stroke-width="1.8">
<path d="M0.9,0.9 H8 L12.1,5 V14.1 H0.9 Z"/><path d="M8,0.9 V5 H12.1" stroke-width="1.4"/>
</svg>
<div class="t" style="left:1674px;top:321px;font-size:14px;color:#333">Unity.data.unityweb</div>
<svg style="left:1893px;top:326px" width="16" height="4" viewBox="0 0 16 4" fill="#222">
<circle cx="2" cy="2" r="1.3"/><circle cx="8" cy="2" r="1.3"/><circle cx="14" cy="2" r="1.3"/>
</svg>
<svg style="left:1643px;top:358px" width="13" height="15" viewBox="0 0 13 15" fill="none" stroke="#111" stroke-width="1.8">
<path d="M0.9,0.9 H8 L12.1,5 V14.1 H0.9 Z"/><path d="M8,0.9 V5 H12.1" stroke-width="1.4"/>
</svg>
<div class="t" style="left:1674px;top:358px;font-size:14px;color:#333">Unity.wasm.code.unityweb</div>
<svg style="left:1893px;top:363px" width="16" height="4" viewBox="0 0 16 4" fill="#222">
<circle cx="2" cy="2" r="1.3"/><circle cx="8" cy="2" r="1.3"/><circle cx="14" cy="2" r="1.3"/>
</svg>
<svg style="left:1643px;top:395px" width="13" height="15" viewBox="0 0 13 15" fill="none" stroke="#111" stroke-width="1.8">
<path d="M0.9,0.9 H8 L12.1,5 V14.1 H0.9 Z"/><path d="M8,0.9 V5 H12.1" stroke-width="1.4"/>
</svg>
<div class="t" style="left:1674px;top:395px;font-size:14px;color:#333">Unity.wasm.framework.uni&hellip;</div>
<svg style="left:1893px;top:400px" width="16" height="4" viewBox="0 0 16 4" fill="#222">
<circle cx="2" cy="2" r="1.3"/><circle cx="8" cy="2" r="1.3"/><circle cx="14" cy="2" r="1.3"/>
</svg>


</body></html>
